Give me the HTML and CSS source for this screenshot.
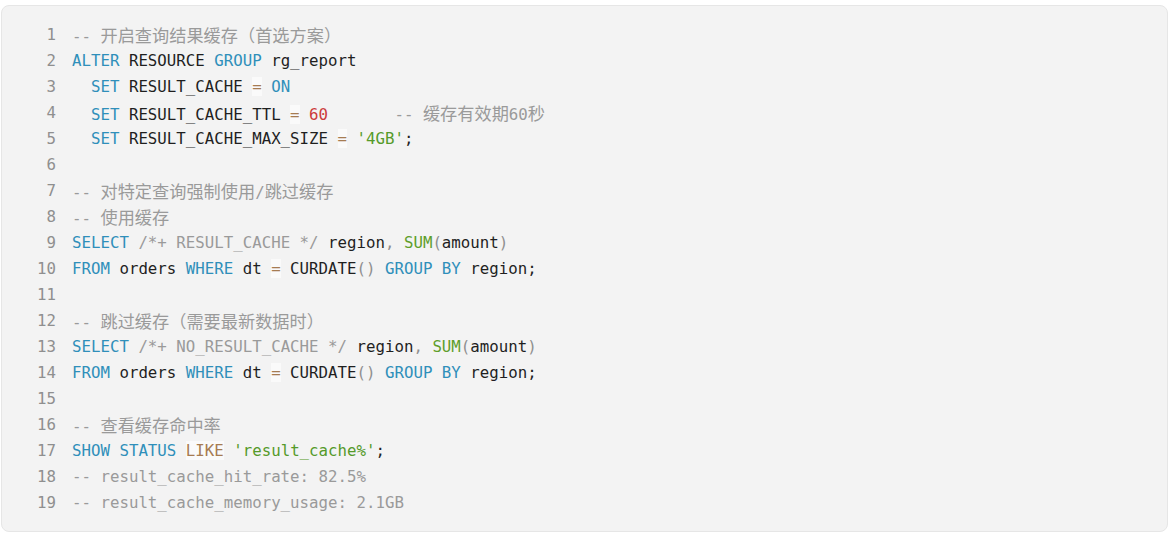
FILE: index.html
```html
<!DOCTYPE html>
<html lang="zh-CN">
<head>
<meta charset="utf-8">
<title>SQL</title>
<link rel="stylesheet" href="styles.css">
</head>
<body>
<div class="page">
  <div class="codebox">
    <div class="line"><span class="ln">1</span><span class="code"><span class="c">-- <span class="zh">开启查询结果缓存（首选方案）</span></span></span></div>
    <div class="line"><span class="ln">2</span><span class="code"><span class="k">ALTER</span> RESOURCE <span class="k">GROUP</span> rg_report</span></div>
    <div class="line"><span class="ln">3</span><span class="code">  <span class="k">SET</span> RESULT_CACHE <span class="o">=</span> <span class="k">ON</span></span></div>
    <div class="line"><span class="ln">4</span><span class="code">  <span class="k">SET</span> RESULT_CACHE_TTL <span class="o">=</span> <span class="n">60</span>       <span class="c">-- <span class="zh">缓存有效期</span>60<span class="zh">秒</span></span></span></div>
    <div class="line"><span class="ln">5</span><span class="code">  <span class="k">SET</span> RESULT_CACHE_MAX_SIZE <span class="o">=</span> <span class="s">'4GB'</span>;</span></div>
    <div class="line"><span class="ln">6</span><span class="code"></span></div>
    <div class="line"><span class="ln">7</span><span class="code"><span class="c">-- <span class="zh">对特定查询强制使用</span>/<span class="zh">跳过缓存</span></span></span></div>
    <div class="line"><span class="ln">8</span><span class="code"><span class="c">-- <span class="zh">使用缓存</span></span></span></div>
    <div class="line"><span class="ln">9</span><span class="code"><span class="k">SELECT</span> <span class="c">/*+ RESULT_CACHE */</span> region<span class="p">,</span> <span class="f">SUM</span><span class="p">(</span>amount<span class="p">)</span></span></div>
    <div class="line"><span class="ln">10</span><span class="code"><span class="k">FROM</span> orders <span class="k">WHERE</span> dt <span class="o">=</span> CURDATE<span class="p">()</span> <span class="k">GROUP</span> <span class="k">BY</span> region;</span></div>
    <div class="line"><span class="ln">11</span><span class="code"></span></div>
    <div class="line"><span class="ln">12</span><span class="code"><span class="c">-- <span class="zh">跳过缓存（需要最新数据时）</span></span></span></div>
    <div class="line"><span class="ln">13</span><span class="code"><span class="k">SELECT</span> <span class="c">/*+ NO_RESULT_CACHE */</span> region<span class="p">,</span> <span class="f">SUM</span><span class="p">(</span>amount<span class="p">)</span></span></div>
    <div class="line"><span class="ln">14</span><span class="code"><span class="k">FROM</span> orders <span class="k">WHERE</span> dt <span class="o">=</span> CURDATE<span class="p">()</span> <span class="k">GROUP</span> <span class="k">BY</span> region;</span></div>
    <div class="line"><span class="ln">15</span><span class="code"></span></div>
    <div class="line"><span class="ln">16</span><span class="code"><span class="c">-- <span class="zh">查看缓存命中率</span></span></span></div>
    <div class="line"><span class="ln">17</span><span class="code"><span class="k">SHOW</span> <span class="k">STATUS</span> <span class="o">LIKE</span> <span class="s">'result_cache%'</span>;</span></div>
    <div class="line"><span class="ln">18</span><span class="code"><span class="c">-- result_cache_hit_rate: 82.5%</span></span></div>
    <div class="line"><span class="ln">19</span><span class="code"><span class="c">-- result_cache_memory_usage: 2.1GB</span></span></div>
  </div>
</div>
</body>
</html>
```

FILE: styles.css
```css
html, body {
  margin: 0;
  padding: 0;
  background: #ffffff;
}

.page {
  padding: 5px 2px 0 1px;
}

.codebox {
  background: #f3f3f3;
  border: 1px solid #e6e6e6;
  border-radius: 8px;
  padding: 16px 16px 15px 16px;
  font-family: "DejaVu Sans Mono", "Liberation Mono", monospace;
  font-size: 15.75px;
  color: #1f1f1f;
}

.line {
  display: flex;
  height: 26px;
  line-height: 26px;
}

.ln {
  flex: none;
  width: 38px;
  margin-right: 16px;
  text-align: right;
  color: #8f8f8f;
}

.code {
  white-space: pre;
}

.zh {
  font-family: "Noto Sans CJK SC", sans-serif;
  font-size: 17.2px;
}

.k { color: #2f8fba; }
.c { color: #9a9a9a; }
.s { color: #559a2a; }
.n { color: #cc3b3b; }
.f { color: #5e9e2a; }
.p { color: #8f8f8f; }
.o {
  color: #a67c52;
  background: rgba(255, 255, 255, 0.6);
}
```
